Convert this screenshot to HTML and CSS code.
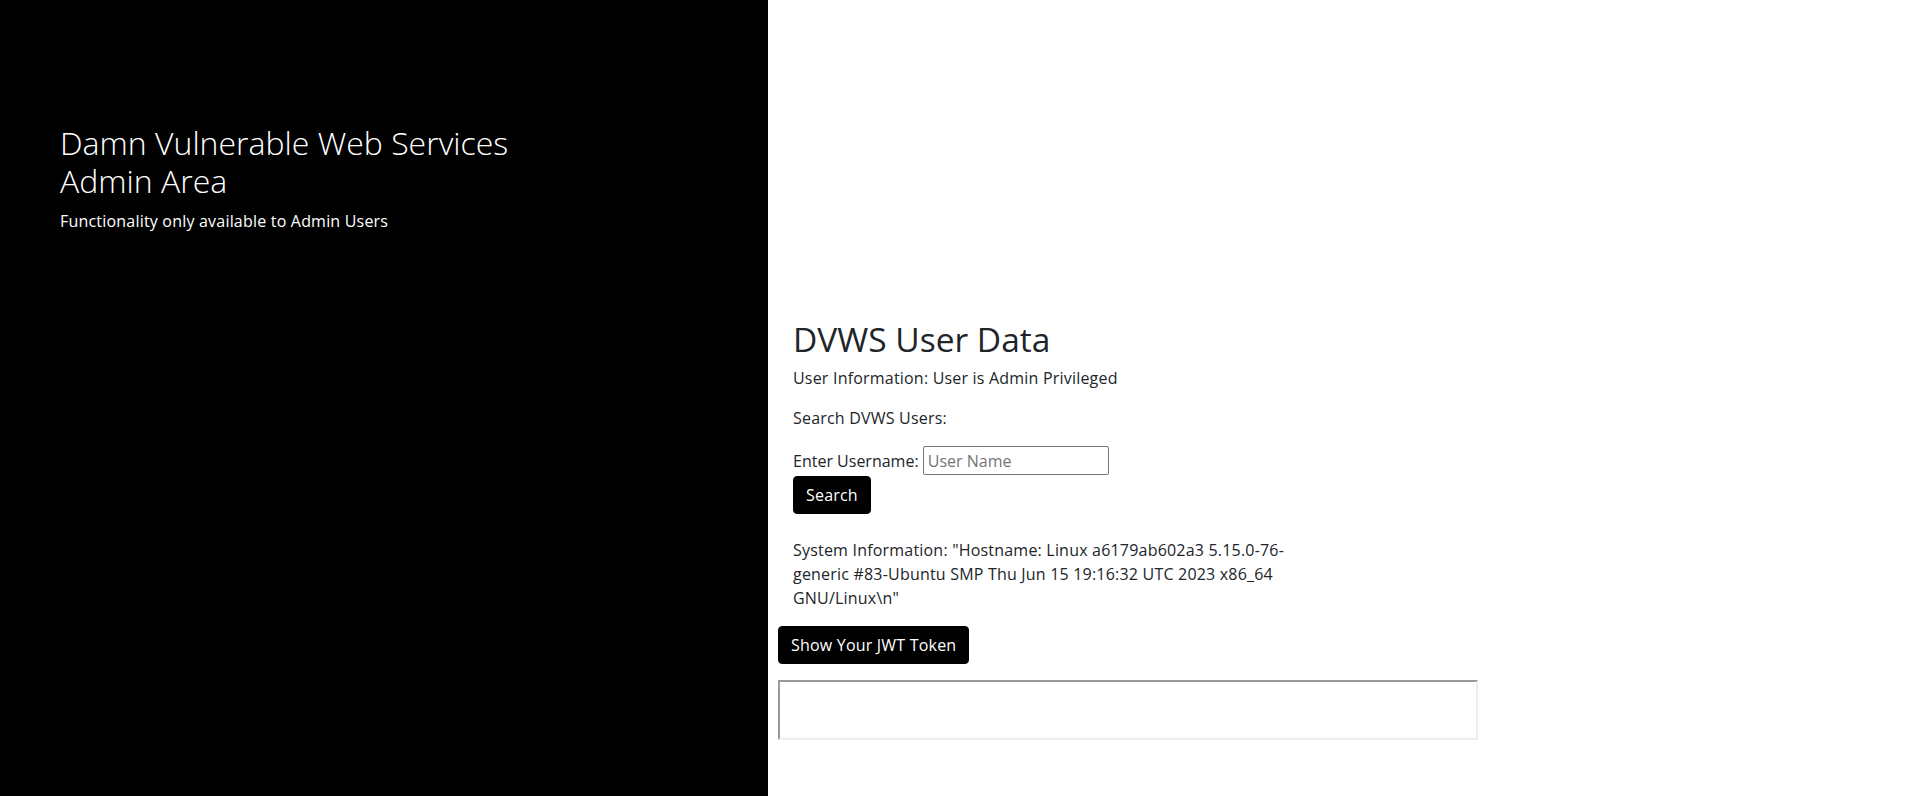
FILE: index.html
```html
<!DOCTYPE html>
<html lang="en">
<head>
  <meta charset="UTF-8" />
  <meta name="viewport" content="width=device-width, initial-scale=1.0"/>
  <title>DVWS Admin Area</title>
  <link rel="stylesheet" href="styles.css">
</head>
<body>
  <div class="page">
    <aside class="intro">
      <h1>Damn Vulnerable Web Services<br>Admin Area</h1>
      <p>Functionality only available to Admin Users</p>
    </aside>
    <main class="panel">
      <section class="user-data">
        <h2>DVWS User Data</h2>
        <p>User Information: User is Admin Privileged</p>
        <p>Search DVWS Users:</p>
        <form class="search" onsubmit="return false;">
          <label>Enter Username: <input type="text" placeholder="User Name"></label>
          <button class="btn" type="submit">Search</button>
        </form>
        <p class="sysinfo">System Information: "Hostname: Linux a6179ab602a3 5.15.0-76-generic #83-Ubuntu SMP Thu Jun 15 19:16:32 UTC 2023 x86_64 GNU/Linux\n"</p>
      </section>
      <button class="btn jwt">Show Your JWT Token</button>
      <div class="token-frame"></div>
    </main>
  </div>
</body>
</html>
```

FILE: styles.css
```css
html, body {
  margin: 0;
  height: 100%;
}
body {
  font-family: "Open Sans", Lato, sans-serif;
  font-size: 16px;
  line-height: 1.5;
  letter-spacing: 0.2px;
  color: #212529;
  background-color: #fff;
}
.page {
  display: flex;
  min-height: 100vh;
}
.intro {
  width: 768px;
  flex-shrink: 0;
  background-color: #000;
  color: #fff;
  padding: 124px 0 0 60px;
  box-sizing: border-box;
}
.intro h1 {
  font-size: 32px;
  font-weight: 300;
  line-height: 38.4px;
  letter-spacing: 0;
  margin: 0 0 8px;
}
.intro p {
  margin: 0;
}
.panel {
  flex: 1;
  padding: 320px 0 0 10px;
}
.user-data {
  padding-left: 15px;
}
.user-data h2 {
  font-size: 33.5px;
  font-weight: 400;
  line-height: 38.4px;
  letter-spacing: 0;
  margin: 0 0 8px;
}
.user-data p {
  margin: 0 0 16px;
}
.search label {
  letter-spacing: 0;
}
.search input {
  font-family: inherit;
  font-size: 16px;
  height: 29px;
  width: 186px;
  box-sizing: border-box;
  border: 1px solid #767676;
  border-radius: 2px;
  padding: 1px 4px;
  color: #212529;
}
.search input::placeholder {
  color: #757575;
}
.btn {
  display: block;
  font-family: inherit;
  font-size: 16px;
  line-height: 1.5;
  letter-spacing: 0.2px;
  color: #fff;
  background-color: #000;
  border: 1px solid #000;
  border-radius: 4px;
  padding: 6px 12px;
  cursor: pointer;
}
.search .btn {
  margin-top: 1px;
}
.user-data .sysinfo {
  max-width: 500px;
  margin-top: 24px;
}
.jwt {
  margin-top: 16px;
}
.token-frame {
  width: 700px;
  height: 60px;
  box-sizing: border-box;
  margin-top: 16px;
  border: 2px solid;
  border-color: #9a9a9a #eeeeee #eeeeee #9a9a9a;
}
```
